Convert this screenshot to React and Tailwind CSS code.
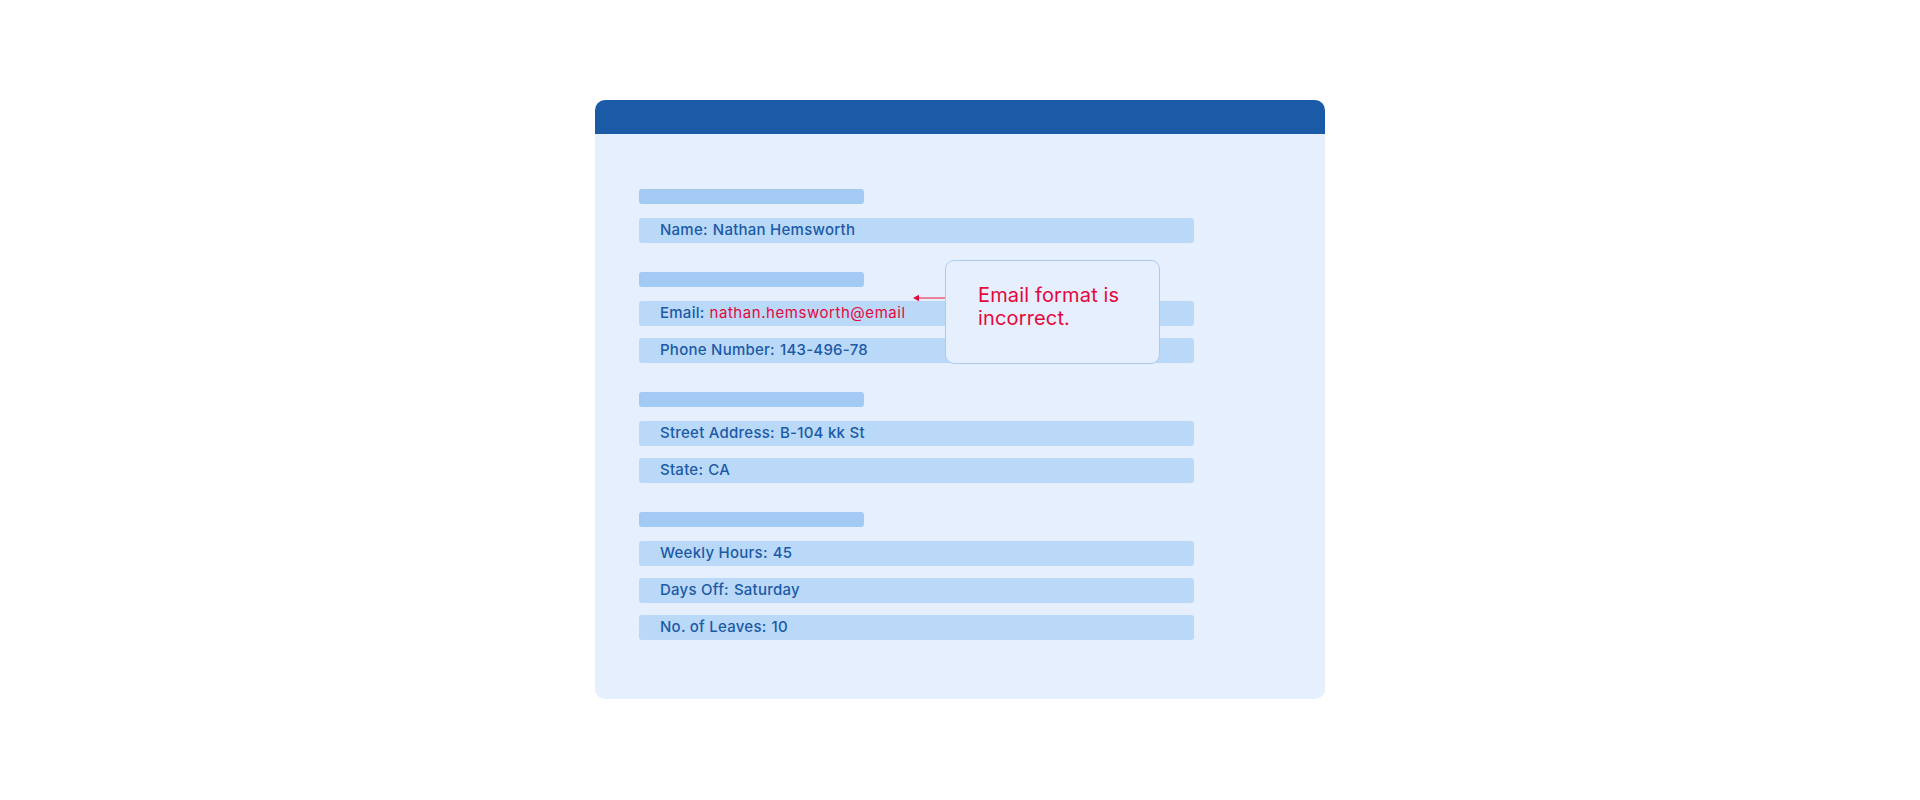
export default function App() {
  const sections = [
    [["Name:", "Nathan Hemsworth"]],
    [
      ["Email:", "nathan.hemsworth@email", true],
      ["Phone Number:", "143-496-78"],
    ],
    [
      ["Street Address:", "B-104 kk St"],
      ["State:", "CA"],
    ],
    [
      ["Weekly Hours:", "45"],
      ["Days Off:", "Saturday"],
      ["No. of Leaves:", "10"],
    ],
  ];

  return (
    <div
      className="w-full h-[800px] bg-white flex justify-center pt-[100px]"
      style={{ fontFamily: "Inter, 'Open Sans', sans-serif" }}
    >
      <div className="relative w-[730px] h-[599px] rounded-[10px] bg-[#e5effe] overflow-hidden flex flex-col">
        <div className="h-[34px] bg-[#1b5aa7] shrink-0" />
        <div className="flex flex-col gap-[29px] pl-[44px] pt-[55px]">
          {sections.map((rows, i) => (
            <div key={i} className="flex flex-col">
              <div className="w-[225px] h-[15px] rounded-[3px] bg-[#a2caf2] mb-[14px]" />
              <div className="flex flex-col gap-[12px]">
                {rows.map(([label, value, bad]) => (
                  <div
                    key={label}
                    className="w-[555px] h-[25px] rounded-[3px] bg-[#bad8f7] flex items-center pl-[21px] text-[15px] text-[#1b5aa7] font-medium tracking-[0.25px]"
                  >
                    <span>{label}</span>
                    <span
                      className={
                        bad
                          ? "ml-[5px] text-[#e6073c] font-normal tracking-[0.55px]"
                          : "ml-[5px]"
                      }
                    >
                      {value}
                    </span>
                  </div>
                ))}
              </div>
            </div>
          ))}
        </div>

        {/* validation callout */}
        <div className="absolute left-[318px] top-[194px] flex items-center">
          <svg width="32" height="8" viewBox="0 0 32 8">
            <line x1="5" y1="4" x2="32" y2="4" stroke="#ec5f80" strokeWidth="1.5" />
            <polygon points="0,4 6,0.8 6,7.2" fill="#e6073c" />
          </svg>
        </div>
        <div className="absolute left-[350px] top-[160px] w-[215px] h-[104px] rounded-[9px] border border-[#a8cdf3] bg-[#e5effe] pl-[32px] pt-[23px] text-[20px] leading-[23px] tracking-[0.15px] text-[#e6073c]">
          Email format is
          <br />
          incorrect.
        </div>
      </div>
    </div>
  );
}
